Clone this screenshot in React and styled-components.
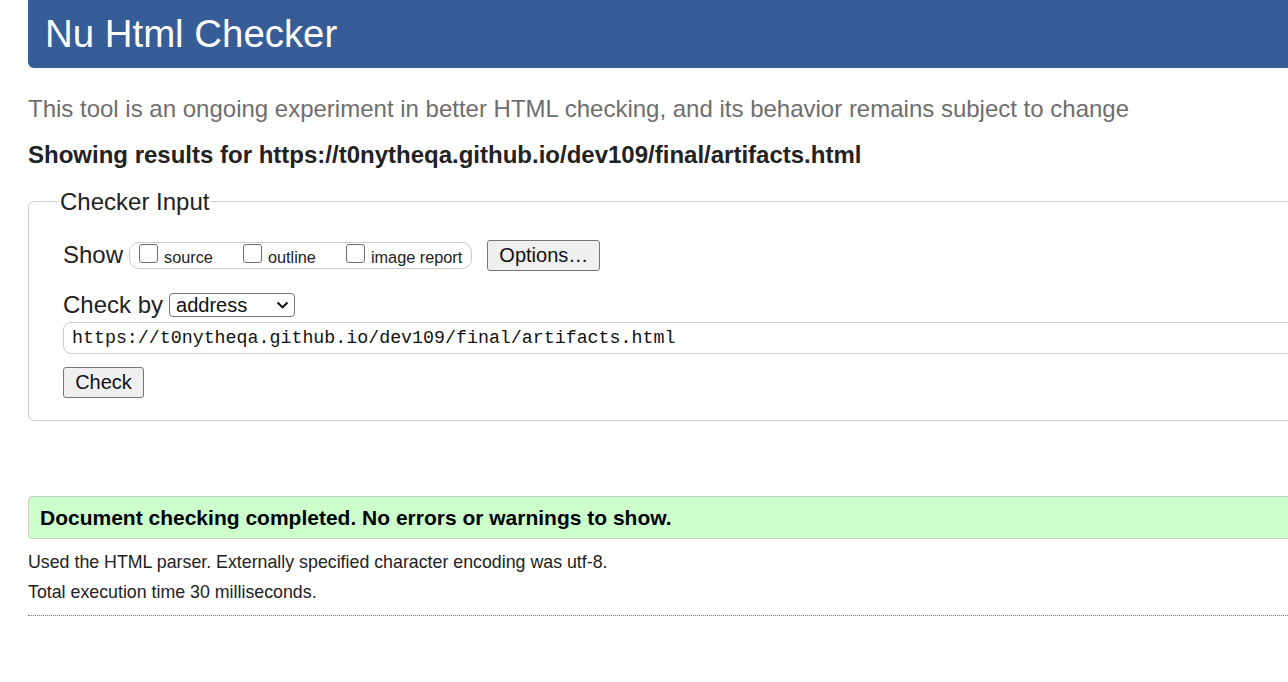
import React from 'react';
import styled, {createGlobalStyle} from 'styled-components';

const checkUrl = 'https://t0nytheqa.github.io/dev109/final/artifacts.html';

const showOptions = ['source', 'outline', 'image report'];

const App = () => {
    return (
        <Page>
            <GlobalStyle />
            <Header>Nu Html Checker</Header>
            <Intro>This tool is an ongoing experiment in better HTML checking, and its behavior remains subject to change</Intro>
            <ResultsFor>Showing results for {checkUrl}</ResultsFor>

            <InputSet>
                <Legend>Checker Input</Legend>
                <ShowRow>
                    <RowLabel>Show</RowLabel>
                    <CheckGroup>
                        {showOptions.map((opt, i) => (
                            <CheckItem key={opt} last={i === showOptions.length - 1}>
                                <Checkbox type="checkbox" />
                                <CheckText>{opt}</CheckText>
                            </CheckItem>
                        ))}
                    </CheckGroup>
                    <Button width={113} style={{marginLeft: 15}}>Options…</Button>
                </ShowRow>

                <ByRow>
                    <RowLabel>Check by</RowLabel>
                    <SelectBox>
                        <Select defaultValue="address">
                            <option value="address">address</option>
                            <option value="file">file upload</option>
                            <option value="text">text input</option>
                        </Select>
                        <svg width="13" height="8" viewBox="0 0 13 8">
                            <path d="M1.5 1.5 L6.5 6.3 L11.5 1.5" fill="none" stroke="#111" strokeWidth="2" />
                        </svg>
                    </SelectBox>
                </ByRow>

                <UrlInput type="url" defaultValue={checkUrl} />
                <Button width={81} style={{marginTop: 13}}>Check</Button>
            </InputSet>

            <Success>Document checking completed. No errors or warnings to show.</Success>
            <DetailsList>
                <Details>Used the HTML parser. Externally specified character encoding was utf-8.</Details>
                <Details>Total execution time 30 milliseconds.</Details>
            </DetailsList>
            <Rule />
        </Page>
    );
};

const GlobalStyle = createGlobalStyle`
    html, body {
        margin: 0;
        padding: 0;
        overflow: hidden;
        background: #fff;
    }
    body {
        font-family: "Liberation Sans", Arial, sans-serif;
        color: #222;
    }
`;

const Page = styled.div`
    width: 1400px;
    padding-left: 28px;
`;

const Header = styled.h1`
    margin: 0;
    height: 68px;
    line-height: 68px;
    padding-left: 17px;
    background: #365d96;
    color: #fff;
    font-size: 38.4px;
    font-weight: normal;
    border-radius: 0 0 6px 6px;
`;

const Intro = styled.p`
    margin: 27px 0 0;
    font-size: 24px;
    line-height: 27.6px;
    color: #6e6e6e;
`;

const ResultsFor = styled.h2`
    margin: 18px 0 0;
    font-size: 24px;
    line-height: 27.6px;
    font-weight: bold;
    color: #222;
`;

const InputSet = styled.fieldset`
    margin: 20px 0 0;
    padding: 24px 34px 22px 34px;
    border: 1px solid #ccc;
    border-radius: 6px;
    min-width: 0;
`;

const Legend = styled.legend`
    margin-left: -4px;
    padding: 0 1px;
    font-size: 24px;
    line-height: 27.6px;
    color: #222;
`;

const ShowRow = styled.div`
    display: flex;
    align-items: center;
    height: 31px;
`;

const ByRow = styled.div`
    display: flex;
    align-items: center;
    height: 28px;
    margin-top: 20px;
`;

const RowLabel = styled.span`
    font-size: 24px;
    line-height: 27.6px;
    margin-right: 6px;
    color: #222;
`;

const CheckGroup = styled.div`
    display: flex;
    align-items: center;
    box-sizing: border-box;
    height: 27px;
    padding: 0 9px;
    border: 1px solid #ccc;
    border-radius: 10px;
`;

const CheckItem = styled.label`
    display: flex;
    align-items: center;
    margin-right: ${p => (p.last ? '0' : '30px')};
`;

const Checkbox = styled.input`
    -webkit-appearance: none;
    appearance: none;
    flex: none;
    box-sizing: border-box;
    width: 19px;
    height: 19px;
    margin: -4px 6px 0 0;
    border: 1px solid #6d6d6d;
    border-radius: 3px;
    background: #fff;
`;

const CheckText = styled.span`
    font-size: 16.3px;
    line-height: 18px;
    padding-top: 4px;
    color: #222;
`;

const Button = styled.button`
    box-sizing: border-box;
    width: ${p => p.width}px;
    height: 31px;
    padding: 0;
    font-family: "Liberation Sans", Arial, sans-serif;
    font-size: 20px;
    color: #111;
    background: #efefef;
    border: 1px solid #767676;
    border-radius: 3px;
`;

const SelectBox = styled.div`
    display: flex;
    align-items: center;
    box-sizing: border-box;
    width: 126px;
    height: 24px;
    padding: 0 5px 0 6px;
    border: 1px solid #767676;
    border-radius: 4px;
    background: #fff;
`;

const Select = styled.select`
    appearance: none;
    flex: 1;
    min-width: 0;
    border: none;
    padding: 0;
    background: transparent;
    font-family: "Liberation Sans", Arial, sans-serif;
    font-size: 20px;
    line-height: 22px;
    color: #111;
    outline: none;
`;

const UrlInput = styled.input`
    display: block;
    box-sizing: border-box;
    width: 100%;
    height: 32px;
    margin-top: 3px;
    padding: 0 8px;
    border: 1px solid #ccc;
    border-radius: 8px;
    font-family: "Liberation Mono", "DejaVu Sans Mono", monospace;
    font-size: 18.3px;
    color: #111;
`;

const Success = styled.div`
    box-sizing: border-box;
    height: 43px;
    margin-top: 75px;
    padding-left: 11px;
    line-height: 41px;
    font-size: 21px;
    font-weight: bold;
    color: #000;
    background: #ccffcc;
    border: 1px solid #ccc;
    border-radius: 4px;
`;

const DetailsList = styled.div`
    margin-top: 8px;
`;

const Details = styled.p`
    margin: 0;
    font-size: 17.8px;
    line-height: 30px;
    color: #222;
`;

const Rule = styled.hr`
    margin: 8px 0 0;
    border: none;
    border-top: 1px dotted #777;
`;

export default App;
